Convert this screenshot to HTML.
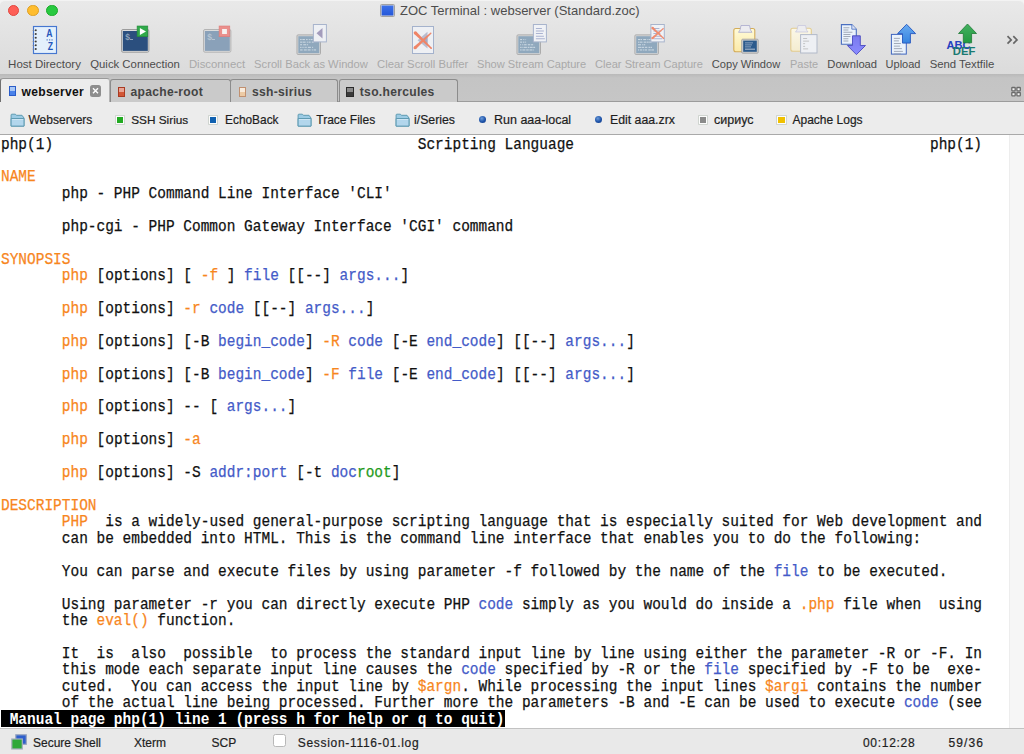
<!DOCTYPE html>
<html><head><meta charset="utf-8"><style>
*{margin:0;padding:0;box-sizing:border-box}
html,body{width:1024px;height:754px;overflow:hidden;background:#f4f4f4}
body{position:relative;font-family:"Liberation Sans",sans-serif}
.abs{position:absolute}
#toolbar{left:0;top:0;width:1024px;height:74px;background:linear-gradient(#e9e9e9,#dbdbdb);border-top:1px solid #f3f3f3;border-radius:5px 5px 0 0}
#band{left:0;top:74px;width:1024px;height:28px;background:linear-gradient(#b9b9b9 0px,#c4c4c4 4px,#c6c6c6 100%);border-bottom:1px solid #9c9c9c}
#bm{left:0;top:102px;width:1024px;height:32px;background:#ececec}
#termtop{left:0;top:134px;width:1024px;height:1px;background:#a9a9a9}
#term{left:0;top:135px;width:1024px;height:593px;background:#fff;overflow:hidden}
#sb{left:1009px;top:135px;width:15px;height:593px;background:#f6f6f6;border-left:1px solid #ededed}
#stat{left:0;top:728px;width:1024px;height:26px;background:#e9e9e9;border-top:1px solid #c2c2c2}
.tl{width:11.5px;height:11.5px;border-radius:50%;top:4.8px}
.lab{font-size:11.2px;color:#4c4c4c;white-space:nowrap;top:58px;line-height:13px}
.dis{color:#a9a9a9}
.row{position:absolute;left:1px;white-space:pre;font-family:"Liberation Mono",monospace;font-size:16px;line-height:16.43px;height:16.43px;color:#111;transform-origin:0 0;transform:scaleX(0.9042);-webkit-text-stroke:0.25px currentColor}
.o{color:#f7861d}.b{color:#445bc8}.g{color:#1f9a20}
.inv{color:#fff;font-weight:bold;-webkit-text-stroke:0}
#invbg{left:1px;top:75.05px;width:504px;height:16.8px;background:#000}
.tab{top:79px;height:23px;border:1px solid #8e8e8e;border-bottom:none;border-radius:4px 4px 0 0;background:#cbcbcb;font-size:12.2px;font-weight:bold;color:#3a3a3a}
.bmk{top:113px;font-size:12px;color:#1e1e1e;white-space:nowrap;line-height:14px;-webkit-text-stroke:0.2px currentColor}
.st{top:736px;font-size:12px;color:#1e1e1e;white-space:nowrap;line-height:14px;-webkit-text-stroke:0.2px currentColor}
</style></head><body>
<div id="toolbar" class="abs"></div>
<div class="abs tl" style="left:7.6px;background:#fe5f57;border:0.8px solid #e2463f"></div>
<div class="abs tl" style="left:27.1px;background:#ffbd2e;border:0.8px solid #dfa023"></div>
<div class="abs tl" style="left:46.3px;background:#28c940;border:0.8px solid #1aab29"></div>
<div class="abs" style="left:380.3px;top:4.1px;width:15px;height:12.7px;border-radius:1.5px;background:linear-gradient(#3d72ea,#2456d8);border:1.6px solid #a2a2a2;box-shadow:inset 0 0 0 0.6px #d8d8d8"></div>
<div class="abs" style="left:400px;top:3px;font-size:13px;color:#4d4d4d;white-space:nowrap;line-height:16px">ZOC Terminal : webserver (Standard.zoc)</div>
<div class="abs lab" style="left:44.5px;width:0;font-size:11.5px"><div style="position:absolute;left:0;transform:translateX(-50%)">Host Directory</div></div>
<div class="abs lab" style="left:135.0px;width:0;font-size:11.35px"><div style="position:absolute;left:0;transform:translateX(-50%)">Quick Connection</div></div>
<div class="abs lab dis" style="left:217.0px;width:0;font-size:11.36px"><div style="position:absolute;left:0;transform:translateX(-50%)">Disconnect</div></div>
<div class="abs lab dis" style="left:311.0px;width:0;font-size:11.2px"><div style="position:absolute;left:0;transform:translateX(-50%)">Scroll Back as Window</div></div>
<div class="abs lab dis" style="left:422.7px;width:0;font-size:11.29px"><div style="position:absolute;left:0;transform:translateX(-50%)">Clear Scroll Buffer</div></div>
<div class="abs lab dis" style="left:531.6px;width:0;font-size:11.1px"><div style="position:absolute;left:0;transform:translateX(-50%)">Show Stream Capture</div></div>
<div class="abs lab dis" style="left:649.0px;width:0;font-size:11.1px"><div style="position:absolute;left:0;transform:translateX(-50%)">Clear Stream Capture</div></div>
<div class="abs lab" style="left:746.0px;width:0;font-size:11.1px"><div style="position:absolute;left:0;transform:translateX(-50%)">Copy Window</div></div>
<div class="abs lab dis" style="left:804.0px;width:0;font-size:11.0px"><div style="position:absolute;left:0;transform:translateX(-50%)">Paste</div></div>
<div class="abs lab" style="left:852.2px;width:0;font-size:11.2px"><div style="position:absolute;left:0;transform:translateX(-50%)">Download</div></div>
<div class="abs lab" style="left:903.0px;width:0;font-size:11.0px"><div style="position:absolute;left:0;transform:translateX(-50%)">Upload</div></div>
<div class="abs lab" style="left:962.0px;width:0;font-size:11.35px"><div style="position:absolute;left:0;transform:translateX(-50%)">Send Textfile</div></div>
<div id="band" class="abs"></div>
<div id="bm" class="abs"></div>
<div id="termtop" class="abs"></div>
<div id="term" class="abs"><div id="invbg" class="abs" style="top:575.05px"></div><div class="row" style="top:1.60px">php(1)                                          Scripting Language                                         php(1)</div>
<div class="row" style="top:34.46px"><span class="o">NAME</span></div>
<div class="row" style="top:50.89px">       php - PHP Command Line Interface &#x27;CLI&#x27;</div>
<div class="row" style="top:83.75px">       php-cgi - PHP Common Gateway Interface &#x27;CGI&#x27; command</div>
<div class="row" style="top:116.61px"><span class="o">SYNOPSIS</span></div>
<div class="row" style="top:133.04px">       <span class="o">php</span> [options] [ <span class="o">-f</span> ] <span class="b">file</span> [[--] <span class="b">args...</span>]</div>
<div class="row" style="top:165.90px">       <span class="o">php</span> [options] <span class="o">-r</span> <span class="b">code</span> [[--] <span class="b">args...</span>]</div>
<div class="row" style="top:198.76px">       <span class="o">php</span> [options] [-B <span class="b">begin_code</span>] <span class="o">-R</span> <span class="b">code</span> [-E <span class="b">end_code</span>] [[--] <span class="b">args...</span>]</div>
<div class="row" style="top:231.62px">       <span class="o">php</span> [options] [-B <span class="b">begin_code</span>] <span class="o">-F</span> <span class="b">file</span> [-E <span class="b">end_code</span>] [[--] <span class="b">args...</span>]</div>
<div class="row" style="top:264.48px">       <span class="o">php</span> [options] -- [ <span class="b">args...</span>]</div>
<div class="row" style="top:297.34px">       <span class="o">php</span> [options] <span class="o">-a</span></div>
<div class="row" style="top:330.20px">       <span class="o">php</span> [options] -S <span class="b">addr:port</span> [-t <span class="b">doc</span><span class="g">root</span>]</div>
<div class="row" style="top:363.06px"><span class="o">DESCRIPTION</span></div>
<div class="row" style="top:379.49px">       <span class="o">PHP</span>  is a widely-used general-purpose scripting language that is especially suited for Web development and</div>
<div class="row" style="top:395.92px">       can be embedded into HTML. This is the command line interface that enables you to do the following:</div>
<div class="row" style="top:428.78px">       You can parse and execute files by using parameter -f followed by the name of the <span class="b">file</span> to be executed.</div>
<div class="row" style="top:461.64px">       Using parameter -r you can directly execute PHP <span class="b">code</span> simply as you would do inside a <span class="o">.php</span> file when  using</div>
<div class="row" style="top:478.07px">       the <span class="o">eval()</span> function.</div>
<div class="row" style="top:510.93px">       It  is  also  possible  to process the standard input line by line using either the parameter -R or -F. In</div>
<div class="row" style="top:527.36px">       this mode each separate input line causes the <span class="b">code</span> specified by -R or the <span class="b">file</span> specified by -F to be  exe-</div>
<div class="row" style="top:543.79px">       cuted.  You can access the input line by <span class="o">$argn</span>. While processing the input lines <span class="o">$argi</span> contains the number</div>
<div class="row" style="top:560.22px">       of the actual line being processed. Further more the parameters -B and -E can be used to execute <span class="b">code</span> (see</div>
<div class="row" style="top:576.65px"><span class="inv"> Manual page php(1) line 1 (press h for help or q to quit)</span></div></div>
<div id="sb" class="abs"></div>
<div id="stat" class="abs"></div>
<svg class="abs" style="left:0;top:0;z-index:5" width="1024" height="60" viewBox="0 0 1024 60"><rect x="33.5" y="26.5" width="23" height="27" fill="#e4f0fc" stroke="#4677d0" stroke-width="1.15"/><circle cx="35.8" cy="30.3" r="0.95" fill="#3a3a3a"/><rect x="32.6" y="30.0" width="2" height="0.7" fill="#8a8a8a"/><circle cx="35.8" cy="34.05" r="0.95" fill="#3a3a3a"/><rect x="32.6" y="33.75" width="2" height="0.7" fill="#8a8a8a"/><circle cx="35.8" cy="37.8" r="0.95" fill="#3a3a3a"/><rect x="32.6" y="37.5" width="2" height="0.7" fill="#8a8a8a"/><circle cx="35.8" cy="41.55" r="0.95" fill="#3a3a3a"/><rect x="32.6" y="41.25" width="2" height="0.7" fill="#8a8a8a"/><circle cx="35.8" cy="45.3" r="0.95" fill="#3a3a3a"/><rect x="32.6" y="45.0" width="2" height="0.7" fill="#8a8a8a"/><circle cx="35.8" cy="49.05" r="0.95" fill="#3a3a3a"/><rect x="32.6" y="48.75" width="2" height="0.7" fill="#8a8a8a"/><text x="49.5" y="36.8" text-anchor="middle" font-family="Liberation Sans" font-weight="bold" font-size="10.2" fill="#2456bb" transform="translate(49.5 0) scale(0.85 1) translate(-49.5 0)">A</text><rect x="46.5" y="39.3" width="1.3" height="1.2" fill="#5a80c8"/><rect x="49" y="39.3" width="1.3" height="1.2" fill="#5a80c8"/><rect x="51.4" y="39.3" width="1.3" height="1.2" fill="#5a80c8"/><text x="50.3" y="49.8" text-anchor="middle" font-family="Liberation Sans" font-weight="bold" font-size="10.2" fill="#2456bb" transform="translate(50.3 0) scale(0.85 1) translate(-50.3 0)">Z</text><rect x="121.5" y="29.5" width="27.4" height="22.7" rx="1.5" fill="#dcdcdc" stroke="#9c9c9c" stroke-width="1"/><rect x="122.8" y="31" width="25" height="19.9" fill="#2b4f7e"/><text x="125.3" y="39.6" font-family="Liberation Sans" font-size="8.5" font-weight="bold" fill="#8fa3bb">$</text><rect x="130" y="39" width="3" height="1" fill="#8fa3bb"/><rect x="137.1" y="26" width="10.7" height="10.7" fill="#30a94a" stroke="#24893a" stroke-width="0.6"/><path d="M139.9 28.1 L146 31.6 L139.9 35.1 Z" fill="#fff"/><rect x="203.5" y="29.5" width="27.4" height="22.7" rx="1.5" fill="#dcdcdc" stroke="#b4b4b4" stroke-width="1"/><rect x="204.8" y="31" width="25" height="19.9" fill="#8aa1b9"/><text x="207.3" y="39.6" font-family="Liberation Sans" font-size="8.5" font-weight="bold" fill="#b7c5d3">$</text><rect x="212" y="39" width="3" height="1" fill="#b7c5d3"/><rect x="219.1" y="26" width="10.7" height="10.7" fill="#ea8f8c" stroke="#de7a78" stroke-width="0.6"/><rect x="222.1" y="29" width="4.8" height="5" fill="#f6f2f2"/><rect x="297.0" y="34.9" width="23.5" height="19.5" rx="1" fill="#d9d9d9" stroke="#ababab"/><rect x="298.3" y="36.199999999999996" width="21" height="17" fill="#8fa8bd"/><rect x="300.10" y="39.00" width="1.50" height="1.1" fill="#e4ecf2" opacity="0.7"/><rect x="302.40" y="39.00" width="2.50" height="1.1" fill="#e4ecf2" opacity="0.7"/><rect x="306.10" y="39.00" width="1.50" height="1.1" fill="#e4ecf2" opacity="0.7"/><rect x="308.80" y="39.00" width="1.00" height="1.1" fill="#e4ecf2" opacity="0.7"/><rect x="310.60" y="39.00" width="2.00" height="1.1" fill="#e4ecf2" opacity="0.7"/><rect x="313.10" y="39.00" width="1.50" height="1.1" fill="#e4ecf2" opacity="0.7"/><rect x="315.40" y="39.00" width="2.00" height="1.1" fill="#e4ecf2" opacity="0.7"/><rect x="300.10" y="41.60" width="2.00" height="1.1" fill="#e4ecf2" opacity="0.7"/><rect x="302.60" y="41.60" width="3.00" height="1.1" fill="#e4ecf2" opacity="0.7"/><rect x="306.80" y="41.60" width="1.00" height="1.1" fill="#e4ecf2" opacity="0.7"/><rect x="308.60" y="41.60" width="2.00" height="1.1" fill="#e4ecf2" opacity="0.7"/><rect x="311.80" y="41.60" width="2.00" height="1.1" fill="#e4ecf2" opacity="0.7"/><rect x="315.00" y="41.60" width="0.10" height="1.1" fill="#e4ecf2" opacity="0.7"/><rect x="300.10" y="44.20" width="2.00" height="1.1" fill="#e4ecf2" opacity="0.7"/><rect x="303.30" y="44.20" width="3.00" height="1.1" fill="#e4ecf2" opacity="0.7"/><rect x="307.10" y="44.20" width="1.00" height="1.1" fill="#e4ecf2" opacity="0.7"/><rect x="300.10" y="46.80" width="1.00" height="1.1" fill="#e4ecf2" opacity="0.7"/><rect x="301.60" y="46.80" width="1.00" height="1.1" fill="#e4ecf2" opacity="0.7"/><rect x="303.40" y="46.80" width="1.00" height="1.1" fill="#e4ecf2" opacity="0.7"/><rect x="305.20" y="46.80" width="1.50" height="1.1" fill="#e4ecf2" opacity="0.7"/><rect x="307.90" y="46.80" width="3.00" height="1.1" fill="#e4ecf2" opacity="0.7"/><rect x="312.10" y="46.80" width="1.00" height="1.1" fill="#e4ecf2" opacity="0.7"/><rect x="300.10" y="49.40" width="2.50" height="1.1" fill="#e4ecf2" opacity="0.7"/><rect x="303.80" y="49.40" width="3.00" height="1.1" fill="#e4ecf2" opacity="0.7"/><rect x="307.60" y="49.40" width="3.00" height="1.1" fill="#e4ecf2" opacity="0.7"/><rect x="311.80" y="49.40" width="1.00" height="1.1" fill="#e4ecf2" opacity="0.7"/><rect x="313.60" y="49.40" width="2.50" height="1.1" fill="#e4ecf2" opacity="0.7"/><rect x="313.4" y="24.5" width="13" height="17.4" fill="#eef0f4" stroke="#a8b4cc"/><path d="M322.5 28 L316.5 33.2 L322.5 38.5 Z" fill="#a39cbc"/><rect x="412.5" y="26.5" width="21" height="27" fill="#eef0f4" stroke="#a4b2cc"/><path d="M427.5 31.8 L417.5 40.2 L427.5 48.5 Z" fill="#b8bccf"/><path d="M427.5 35 L421.5 40.2 L427.5 45.5 Z" fill="#a6abc4"/><path d="M414.18 33.95 L430.64 48.87 L431.76 47.73 L416.42 31.65 Z" fill="#ef8467"/><circle cx="415.3" cy="32.8" r="1.6" fill="#ef8467"/><circle cx="431.2" cy="48.3" r="0.8" fill="#ef8467"/><path d="M416.01 48.91 L431.27 33.82 L430.33 32.78 L413.99 46.69 Z" fill="#ef8669"/><circle cx="415.0" cy="47.8" r="1.5" fill="#ef8669"/><circle cx="430.8" cy="33.3" r="0.7" fill="#ef8669"/><rect x="517.0" y="34.9" width="23.5" height="19.5" rx="1" fill="#d9d9d9" stroke="#ababab"/><rect x="518.3" y="36.199999999999996" width="21" height="17" fill="#8fa8bd"/><rect x="520.10" y="39.00" width="2.00" height="1.1" fill="#e4ecf2" opacity="0.7"/><rect x="523.30" y="39.00" width="1.00" height="1.1" fill="#e4ecf2" opacity="0.7"/><rect x="525.50" y="39.00" width="0.60" height="1.1" fill="#e4ecf2" opacity="0.7"/><rect x="520.10" y="41.60" width="2.00" height="1.1" fill="#e4ecf2" opacity="0.7"/><rect x="522.90" y="41.60" width="1.50" height="1.1" fill="#e4ecf2" opacity="0.7"/><rect x="525.20" y="41.60" width="0.90" height="1.1" fill="#e4ecf2" opacity="0.7"/><rect x="520.10" y="44.20" width="1.00" height="1.1" fill="#e4ecf2" opacity="0.7"/><rect x="522.30" y="44.20" width="1.00" height="1.1" fill="#e4ecf2" opacity="0.7"/><rect x="524.10" y="44.20" width="2.50" height="1.1" fill="#e4ecf2" opacity="0.7"/><rect x="527.80" y="44.20" width="2.50" height="1.1" fill="#e4ecf2" opacity="0.7"/><rect x="531.10" y="44.20" width="2.00" height="1.1" fill="#e4ecf2" opacity="0.7"/><rect x="533.90" y="44.20" width="0.20" height="1.1" fill="#e4ecf2" opacity="0.7"/><rect x="520.10" y="46.80" width="1.50" height="1.1" fill="#e4ecf2" opacity="0.7"/><rect x="522.40" y="46.80" width="1.00" height="1.1" fill="#e4ecf2" opacity="0.7"/><rect x="523.90" y="46.80" width="3.00" height="1.1" fill="#e4ecf2" opacity="0.7"/><rect x="527.70" y="46.80" width="1.50" height="1.1" fill="#e4ecf2" opacity="0.7"/><rect x="529.70" y="46.80" width="3.00" height="1.1" fill="#e4ecf2" opacity="0.7"/><rect x="533.20" y="46.80" width="1.90" height="1.1" fill="#e4ecf2" opacity="0.7"/><rect x="520.10" y="49.40" width="1.50" height="1.1" fill="#e4ecf2" opacity="0.7"/><rect x="522.40" y="49.40" width="3.00" height="1.1" fill="#e4ecf2" opacity="0.7"/><rect x="526.20" y="49.40" width="2.50" height="1.1" fill="#e4ecf2" opacity="0.7"/><rect x="529.50" y="49.40" width="3.00" height="1.1" fill="#e4ecf2" opacity="0.7"/><rect x="533.30" y="49.40" width="0.80" height="1.1" fill="#e4ecf2" opacity="0.7"/><rect x="533.4" y="24.5" width="13" height="17.4" fill="#f0f2f6" stroke="#a8b4cc"/><rect x="535.9" y="28" width="6" height="0.8" fill="#9aa4c8"/><rect x="535.9" y="30.6" width="8" height="0.8" fill="#9aa4c8"/><rect x="535.9" y="33.2" width="7" height="0.8" fill="#9aa4c8"/><rect x="535.9" y="35.800000000000004" width="8" height="0.8" fill="#9aa4c8"/><rect x="535.9" y="38.400000000000006" width="9" height="0.8" fill="#9aa4c8"/><rect x="634.9" y="34.9" width="23.5" height="19.5" rx="1" fill="#d9d9d9" stroke="#ababab"/><rect x="636.1999999999999" y="36.199999999999996" width="21" height="17" fill="#8fa8bd"/><rect x="638.00" y="39.00" width="2.00" height="1.1" fill="#e4ecf2" opacity="0.7"/><rect x="640.50" y="39.00" width="1.50" height="1.1" fill="#e4ecf2" opacity="0.7"/><rect x="643.20" y="39.00" width="3.00" height="1.1" fill="#e4ecf2" opacity="0.7"/><rect x="647.40" y="39.00" width="1.00" height="1.1" fill="#e4ecf2" opacity="0.7"/><rect x="648.90" y="39.00" width="1.00" height="1.1" fill="#e4ecf2" opacity="0.7"/><rect x="650.40" y="39.00" width="2.00" height="1.1" fill="#e4ecf2" opacity="0.7"/><rect x="653.20" y="39.00" width="2.50" height="1.1" fill="#e4ecf2" opacity="0.7"/><rect x="638.00" y="41.60" width="1.00" height="1.1" fill="#e4ecf2" opacity="0.7"/><rect x="639.50" y="41.60" width="3.00" height="1.1" fill="#e4ecf2" opacity="0.7"/><rect x="643.70" y="41.60" width="2.50" height="1.1" fill="#e4ecf2" opacity="0.7"/><rect x="646.70" y="41.60" width="2.00" height="1.1" fill="#e4ecf2" opacity="0.7"/><rect x="649.20" y="41.60" width="2.50" height="1.1" fill="#e4ecf2" opacity="0.7"/><rect x="652.90" y="41.60" width="0.10" height="1.1" fill="#e4ecf2" opacity="0.7"/><rect x="638.00" y="44.20" width="3.00" height="1.1" fill="#e4ecf2" opacity="0.7"/><rect x="642.20" y="44.20" width="1.00" height="1.1" fill="#e4ecf2" opacity="0.7"/><rect x="643.70" y="44.20" width="1.50" height="1.1" fill="#e4ecf2" opacity="0.7"/><rect x="638.00" y="46.80" width="3.00" height="1.1" fill="#e4ecf2" opacity="0.7"/><rect x="641.50" y="46.80" width="2.50" height="1.1" fill="#e4ecf2" opacity="0.7"/><rect x="644.80" y="46.80" width="2.50" height="1.1" fill="#e4ecf2" opacity="0.7"/><rect x="648.50" y="46.80" width="2.00" height="1.1" fill="#e4ecf2" opacity="0.7"/><rect x="651.00" y="46.80" width="1.00" height="1.1" fill="#e4ecf2" opacity="0.7"/><rect x="638.00" y="49.40" width="1.00" height="1.1" fill="#e4ecf2" opacity="0.7"/><rect x="639.80" y="49.40" width="2.50" height="1.1" fill="#e4ecf2" opacity="0.7"/><rect x="643.10" y="49.40" width="1.00" height="1.1" fill="#e4ecf2" opacity="0.7"/><rect x="644.60" y="49.40" width="2.50" height="1.1" fill="#e4ecf2" opacity="0.7"/><rect x="648.30" y="49.40" width="2.50" height="1.1" fill="#e4ecf2" opacity="0.7"/><rect x="651.30" y="49.40" width="2.70" height="1.1" fill="#e4ecf2" opacity="0.7"/><rect x="650.9" y="24.5" width="13.4" height="17.4" fill="#f0f2f6" stroke="#a8b4cc"/><rect x="653.4" y="28" width="6" height="0.8" fill="#9aa4c8"/><rect x="653.4" y="30.6" width="8" height="0.8" fill="#9aa4c8"/><rect x="653.4" y="33.2" width="7" height="0.8" fill="#9aa4c8"/><rect x="653.4" y="35.800000000000004" width="8" height="0.8" fill="#9aa4c8"/><rect x="653.4" y="38.400000000000006" width="9" height="0.8" fill="#9aa4c8"/><path d="M651.78 28.87 L663.15 38.87 L664.05 37.93 L653.42 27.13 Z" fill="#ef8a6e"/><circle cx="652.6" cy="28.0" r="1.2" fill="#ef8a6e"/><circle cx="663.6" cy="38.4" r="0.65" fill="#ef8a6e"/><path d="M653.13 39.02 L663.60 29.05 L662.80 28.15 L651.67 37.38 Z" fill="#ef8c70"/><circle cx="652.4" cy="38.2" r="1.1" fill="#ef8c70"/><circle cx="663.2" cy="28.6" r="0.6" fill="#ef8c70"/><defs><linearGradient id="cb" x1="0" y1="0" x2="0" y2="1"><stop offset="0" stop-color="#fffbd8"/><stop offset="1" stop-color="#fbe9a8"/></linearGradient><linearGradient id="cb2" x1="0" y1="0" x2="0" y2="1"><stop offset="0" stop-color="#fbf8e8"/><stop offset="1" stop-color="#f4ecd0"/></linearGradient><linearGradient id="up" x1="0" y1="0" x2="0" y2="1"><stop offset="0" stop-color="#69aaf0"/><stop offset="1" stop-color="#3584e0"/></linearGradient><linearGradient id="gr" x1="0" y1="0" x2="0" y2="1"><stop offset="0" stop-color="#44b060"/><stop offset="1" stop-color="#229a40"/></linearGradient><linearGradient id="dn" x1="0" y1="0" x2="0" y2="1"><stop offset="0" stop-color="#7a7aee"/><stop offset="1" stop-color="#8a8cff"/></linearGradient></defs><rect x="733.8" y="28.5" width="21" height="23.2" rx="2" fill="url(#cb)" stroke="#d4ac58" stroke-width="1.1"/><path d="M738.5 32.3 L740 30 L741 25.5 L749.5 25.5 L750.5 30 L752 32.3 Z" fill="#ececf0" stroke="#a0a0c8" stroke-width="0.7"/><rect x="741.7" y="39.2" width="16.5" height="14" rx="1" fill="#d0d0d0" stroke="#9c9c9c" stroke-width="0.8"/><rect x="743.2" y="40.6" width="13.6" height="11.2" fill="#2b5a8c"/><rect x="745" y="42.5" width="8" height="0.8" fill="#9fb3cc"/><rect x="745" y="44.5" width="7" height="0.8" fill="#9fb3cc"/><rect x="745" y="46.5" width="6" height="0.8" fill="#9fb3cc"/><rect x="745" y="48.7" width="10" height="0.9" fill="#c0cedd"/><rect x="790.8" y="28.3" width="20.5" height="23" rx="2" fill="url(#cb2)" stroke="#e2cc90" stroke-width="1.1"/><path d="M795.5 32 L797 30 L798 25.5 L805.5 25.5 L806.5 30 L808 32 Z" fill="#ededf0" stroke="#c4c4dc" stroke-width="0.7"/><rect x="800.6" y="34.6" width="16.4" height="18.4" fill="#eef0f4" stroke="#b2bac9"/><rect x="803.1" y="38.1" width="4" height="0.8" fill="#b8b8b8"/><rect x="803.1" y="40.7" width="6" height="0.8" fill="#b8b8b8"/><rect x="803.1" y="43.300000000000004" width="2" height="0.8" fill="#b8b8b8"/><rect x="803.1" y="45.900000000000006" width="2" height="0.8" fill="#b8b8b8"/><rect x="803.1" y="48.50000000000001" width="5" height="0.8" fill="#b8b8b8"/><path d="M841.4 24.6 H851.8 L856.3 29.2 V44.3 H841.4 Z" fill="#eaf2fb" stroke="#4a6fc0" stroke-width="1.1"/><path d="M851.8 24.6 V29.2 H856.3" fill="#dde4f4" stroke="#4a6fc0" stroke-width="0.8"/><rect x="843.4" y="27.4" width="6" height="0.8" fill="#9098a8"/><rect x="843.4" y="29.599999999999998" width="5" height="0.8" fill="#9098a8"/><rect x="843.4" y="31.799999999999997" width="9" height="0.8" fill="#9098a8"/><rect x="843.4" y="34.0" width="7" height="0.8" fill="#9098a8"/><rect x="843.4" y="36.2" width="7" height="0.8" fill="#9098a8"/><rect x="843.4" y="38.4" width="5" height="0.8" fill="#9098a8"/><rect x="843.4" y="40.6" width="5" height="0.8" fill="#9098a8"/><path d="M852.5 35.8 H860.3 V45.5 H865.5 L856.4 54.6 L847.4 45.5 H852.5 Z" fill="url(#dn)" stroke="#4a4ac0" stroke-width="0.9"/><rect x="891.4" y="34.4" width="14.9" height="19.7" fill="#eaf2fb" stroke="#3f66c0"/><rect x="893.9" y="37.9" width="6" height="0.8" fill="#9098a8"/><rect x="893.9" y="40.5" width="5" height="0.8" fill="#9098a8"/><rect x="893.9" y="43.1" width="7" height="0.8" fill="#9098a8"/><rect x="893.9" y="45.7" width="6" height="0.8" fill="#9098a8"/><rect x="893.9" y="48.300000000000004" width="8" height="0.8" fill="#9098a8"/><rect x="893.9" y="50.900000000000006" width="9" height="0.8" fill="#9098a8"/><rect x="893.9" y="53.50000000000001" width="7" height="0.8" fill="#9098a8"/><path d="M906.6 24.3 L915.6 33.6 H910.4 V43.1 H902.5 V33.6 H897.6 Z" fill="url(#up)" stroke="#2456c0" stroke-width="0.9"/><text x="946.5" y="48.8" font-family="Liberation Sans" font-weight="bold" font-size="11.3" fill="#2440c0" textLength="24" lengthAdjust="spacingAndGlyphs">ABC</text><path d="M967.5 24 L976.5 33.5 H971.6 V42.8 H963.3 V33.5 H958.5 Z" fill="url(#gr)" stroke="#1f7a36" stroke-width="0.8"/><text x="952.8" y="54.6" font-family="Liberation Sans" font-weight="bold" font-size="11.3" fill="#1a7a72" textLength="22.5" lengthAdjust="spacingAndGlyphs">DEF</text><path d="M1007.5 36.2 L1011.2 39.9 L1007.5 43.6 M1013.3 36.2 L1017 39.9 L1013.3 43.6" fill="none" stroke="#666" stroke-width="1.7"/></svg>
<div class="abs" style="left:0px;top:78.4px;width:109.5px;height:23.599999999999994px;background:#ececec;border:1px solid #707070;border-bottom:none;border-radius:3px 3px 0 0;z-index:3;border-right-color:#b4b4b4;border-top-color:#9a9a9a"></div><div class="abs" style="left:21.5px;top:84.6px;font-size:12.1px;letter-spacing:0.3px;font-weight:bold;color:#111;line-height:14px;white-space:nowrap;z-index:4">webserver</div><div class="abs" style="left:8.8px;top:86px;width:7.4px;height:10.4px;border:1px solid #2a5cc8;background:linear-gradient(#a9c8f6 0,#a9c8f6 50%,#4a82ea 50%,#4a82ea 100%);z-index:4"></div>
<div class="abs" style="left:90px;top:85px;width:11px;height:11.5px;border-radius:2.5px;background:#8e8e8e;z-index:4"></div>
<svg class="abs" style="left:90px;top:85px;z-index:4" width="11" height="11.5"><path d="M3 3.2 L8 8.3 M8 3.2 L3 8.3" stroke="#fff" stroke-width="1.4"/></svg>
<div class="abs" style="left:109.5px;top:79px;width:121px;height:23px;background:#cacaca;border:1px solid #8c8c8c;border-bottom:none;border-radius:3px 3px 0 0;z-index:2;"></div><div class="abs" style="left:130.5px;top:84.6px;font-size:12.1px;letter-spacing:0.3px;font-weight:bold;color:#444;line-height:14px;white-space:nowrap;z-index:4">apache-root</div><div class="abs" style="left:118.1px;top:87.1px;width:7.4px;height:10.4px;border:1px solid #a83a22;background:linear-gradient(#e8a494 0,#e8a494 50%,#d25636 50%,#d25636 100%);z-index:4"></div>
<div class="abs" style="left:230.3px;top:79px;width:108.2px;height:23px;background:#cacaca;border:1px solid #8c8c8c;border-bottom:none;border-radius:3px 3px 0 0;z-index:2;"></div><div class="abs" style="left:252px;top:84.6px;font-size:12.1px;letter-spacing:0.3px;font-weight:bold;color:#444;line-height:14px;white-space:nowrap;z-index:4">ssh-sirius</div><div class="abs" style="left:238.5px;top:87.1px;width:7.4px;height:10.4px;border:1px solid #c09070;background:linear-gradient(#f8ebdc 0,#f8ebdc 50%,#eccaa4 50%,#eccaa4 100%);z-index:4"></div>
<div class="abs" style="left:338.5px;top:79px;width:119.2px;height:23px;background:#cacaca;border:1px solid #8c8c8c;border-bottom:none;border-radius:3px 3px 0 0;z-index:2;"></div><div class="abs" style="left:359.8px;top:84.6px;font-size:12.1px;letter-spacing:0.3px;font-weight:bold;color:#444;line-height:14px;white-space:nowrap;z-index:4">tso.hercules</div><div class="abs" style="left:346.4px;top:87.1px;width:7.4px;height:10.4px;border:1px solid #2a2a2a;background:linear-gradient(#8a8a8a 0,#8a8a8a 50%,#3a3a3a 50%,#3a3a3a 100%);z-index:4"></div>
<svg class="abs" style="left:1010px;top:86px;z-index:4" width="12" height="12"><g fill="#f2f2f2" stroke="#6a6a6a" stroke-width="1.3"><rect x="1.8" y="1.5" width="3.4" height="3.4" rx="0.6"/><rect x="6.9" y="1.5" width="3.4" height="3.4" rx="0.6"/><rect x="1.8" y="6.5" width="3.4" height="3.4" rx="0.6"/><rect x="6.9" y="6.5" width="3.4" height="3.4" rx="0.6"/></g></svg>
<svg class="abs" style="left:9.5px;top:113px;z-index:4" width="16" height="15"><path d="M1.1 13.1 V2 Q1.1 1.2 1.9 1.2 H5.4 L6.4 2.3 H12 L14 5 V13.1 Z" fill="#9ccbe4" stroke="#5f9bb2" stroke-width="1"/><path d="M1.1 5.5 H14 V13.1 H1.1 Z" fill="#b2d6ec" stroke="#5f9bb2" stroke-width="1"/><path d="M2 6.5 H13.2" stroke="#d4e8f6" stroke-width="0.8"/></svg>
<div class="abs bmk" style="left:28.5px;z-index:4;font-size:12px">Webservers</div>
<div class="abs" style="left:115.8px;top:115.5px;width:8.2px;height:8.4px;background:#22aa22;border:1.3px solid #fcfcfc;box-shadow:0 0 0 0.8px #c9cfc9;z-index:4"></div>
<div class="abs bmk" style="left:131.2px;z-index:4;font-size:11.8px">SSH Sirius</div>
<div class="abs" style="left:209.2px;top:115.5px;width:8.2px;height:8.4px;background:#1060b0;border:1.3px solid #fcfcfc;box-shadow:0 0 0 0.8px #c9cfc9;z-index:4"></div>
<div class="abs bmk" style="left:225px;z-index:4;font-size:11.9px">EchoBack</div>
<svg class="abs" style="left:297px;top:113px;z-index:4" width="16" height="15"><path d="M1.1 13.1 V2 Q1.1 1.2 1.9 1.2 H5.4 L6.4 2.3 H12 L14 5 V13.1 Z" fill="#9ccbe4" stroke="#5f9bb2" stroke-width="1"/><path d="M1.1 5.5 H14 V13.1 H1.1 Z" fill="#b2d6ec" stroke="#5f9bb2" stroke-width="1"/><path d="M2 6.5 H13.2" stroke="#d4e8f6" stroke-width="0.8"/></svg>
<div class="abs bmk" style="left:316.3px;z-index:4;font-size:12px">Trace Files</div>
<svg class="abs" style="left:394.5px;top:113px;z-index:4" width="16" height="15"><path d="M1.1 13.1 V2 Q1.1 1.2 1.9 1.2 H5.4 L6.4 2.3 H12 L14 5 V13.1 Z" fill="#9ccbe4" stroke="#5f9bb2" stroke-width="1"/><path d="M1.1 5.5 H14 V13.1 H1.1 Z" fill="#b2d6ec" stroke="#5f9bb2" stroke-width="1"/><path d="M2 6.5 H13.2" stroke="#d4e8f6" stroke-width="0.8"/></svg>
<div class="abs bmk" style="left:414px;z-index:4;font-size:12.3px">i/Series</div>
<div class="abs" style="left:478.8px;top:116px;width:7.4px;height:7.4px;border-radius:50%;background:radial-gradient(circle at 40% 35%,#6a9ad8 0,#1d52a8 55%,#123a80 100%);z-index:4"></div>
<div class="abs bmk" style="left:494px;z-index:4;font-size:12.5px">Run aaa-local</div>
<div class="abs" style="left:594.6px;top:116px;width:7.4px;height:7.4px;border-radius:50%;background:radial-gradient(circle at 40% 35%,#6a9ad8 0,#1d52a8 55%,#123a80 100%);z-index:4"></div>
<div class="abs bmk" style="left:610px;z-index:4;font-size:12.3px">Edit aaa.zrx</div>
<div class="abs" style="left:699.1px;top:115.5px;width:8.2px;height:8.4px;background:#8a8a8a;border:1.3px solid #fcfcfc;box-shadow:0 0 0 0.8px #c9cfc9;z-index:4"></div>
<div class="abs bmk" style="left:714px;z-index:4;font-size:12.5px">сириус</div>
<div class="abs" style="left:777.4px;top:115.5px;width:8.2px;height:8.4px;background:#f0c000;border:1.3px solid #fcfcfc;box-shadow:0 0 0 0.8px #c9cfc9;z-index:4"></div>
<div class="abs bmk" style="left:792.5px;z-index:4;font-size:12px">Apache Logs</div>
<svg class="abs" style="left:11px;top:734px;z-index:4" width="17" height="17"><rect x="4.8" y="0.8" width="10.5" height="9.5" fill="#2e5fcc" stroke="#9aa6c0" stroke-width="1.2"/><rect x="0.8" y="5" width="10.5" height="10" fill="#2ea83a" stroke="#a8b0c0" stroke-width="1.2"/></svg>
<div class="abs st" style="left:33px;z-index:4;letter-spacing:0px">Secure Shell</div>
<div class="abs st" style="left:134px;z-index:4;letter-spacing:0px">Xterm</div>
<div class="abs st" style="left:211.5px;z-index:4;letter-spacing:0px">SCP</div>
<div class="abs st" style="left:297.7px;z-index:4;letter-spacing:0.7px">Session-1116-01.log</div>
<div class="abs st" style="left:863px;z-index:4;letter-spacing:0.7px">00:12:28</div>
<div class="abs st" style="left:948.5px;z-index:4;letter-spacing:1.1px">59/36</div>
<div class="abs" style="left:273px;top:734px;width:13px;height:13px;border-radius:2.5px;background:#fff;border:1px solid #b8b8b8;z-index:4"></div>
</body></html>
